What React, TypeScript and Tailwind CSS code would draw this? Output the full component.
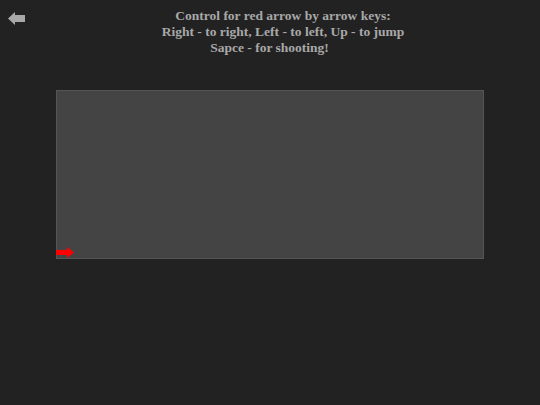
export default function App() {
    return (
        <div className="w-[540px] h-[405px] bg-[#222222] overflow-hidden" style={{ fontFamily: '"Liberation Serif", serif' }}>
            {/* Header */}
            <div className="flex pt-2">
                <button className="w-[26px] pl-2 pt-1 flex items-start">
                    <svg width="18" height="13" viewBox="0 0 18 13">
                        <path d="M0 6.5 L7 0 L7 3 L17 3 L17 10 L7 10 L7 13 Z" fill="#a8a8a8" />
                    </svg>
                </button>
                <div className="flex-1 text-center text-[13.5px] leading-4 font-bold text-[#a8a8a8]">
                    <div>Control for red arrow by arrow keys:</div>
                    <div>Right - to right, Left - to left, Up - to jump</div>
                    <div className="pr-[27px]">Sapce - for shooting!</div>
                </div>
            </div>

            {/* Game field */}
            <div className="relative mt-[34px] ml-[56px] w-[428px] h-[169px] bg-[#444444] border border-[#555555]">
                <svg className="absolute left-[-1px] bottom-0" width="19" height="11" viewBox="0 0 19 11">
                    <path d="M0 3 L11 3 L11 0 L18 5.5 L11 11 L11 8 L0 8 Z" fill="#ff0000" />
                </svg>
            </div>
        </div>
    );
}
